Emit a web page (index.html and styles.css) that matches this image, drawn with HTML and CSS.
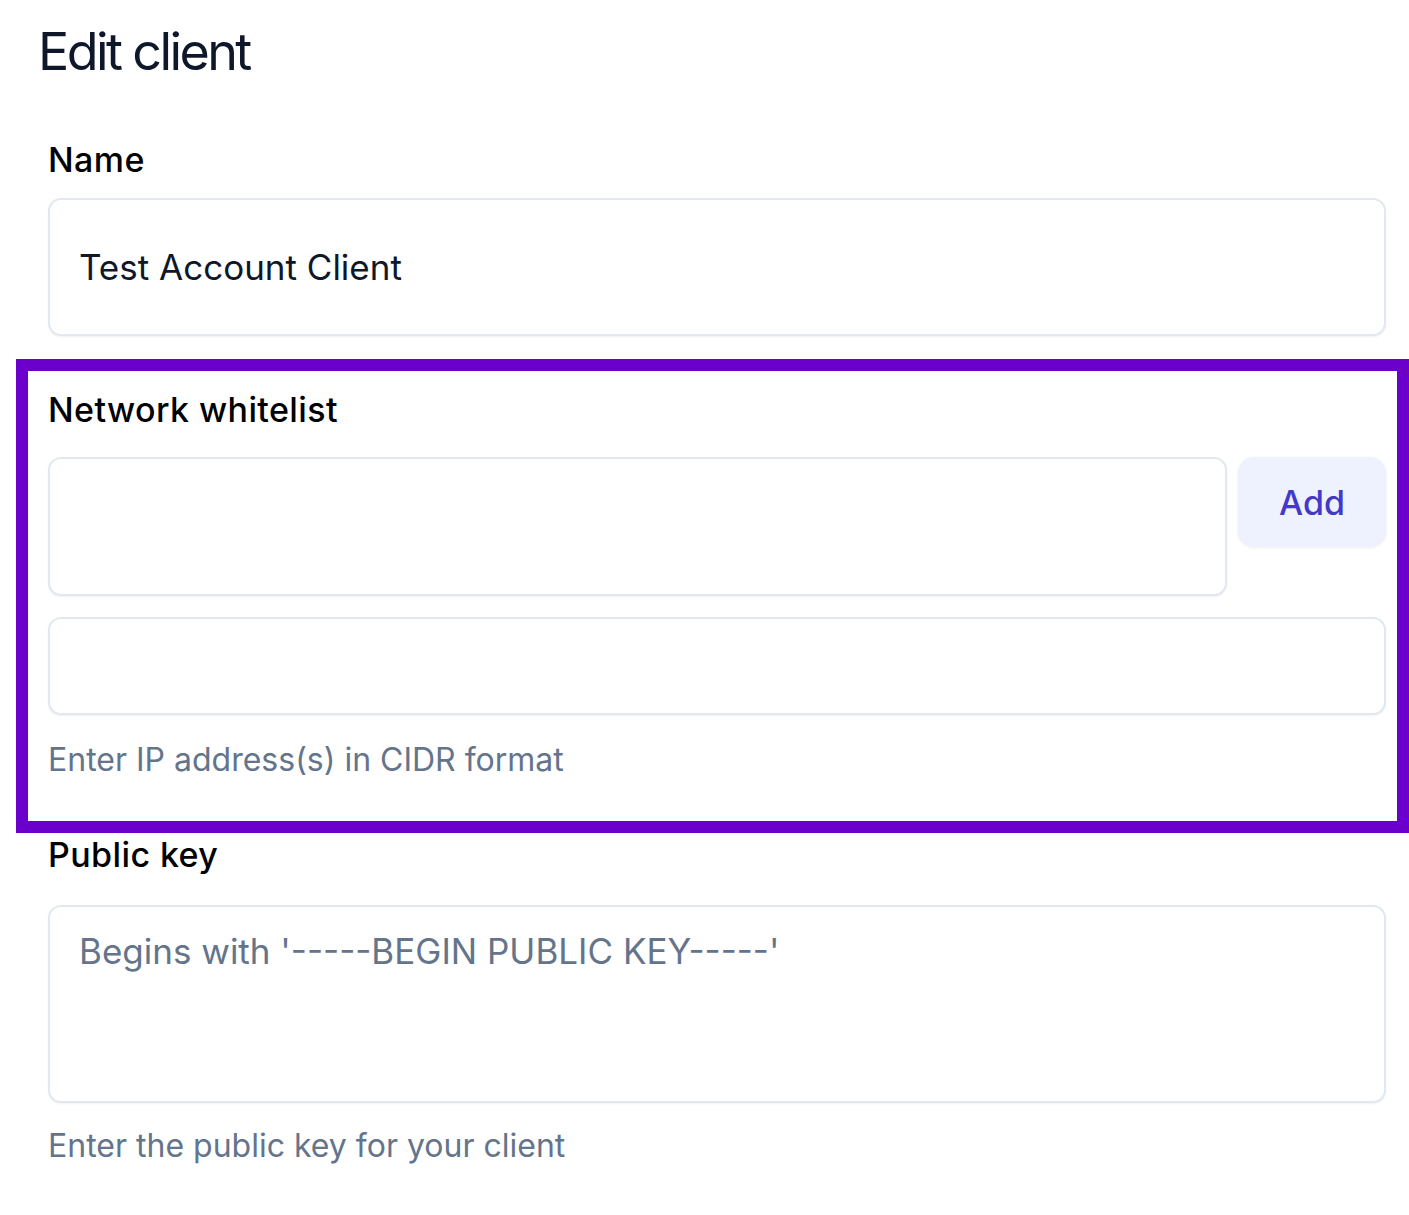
FILE: index.html
```html
<!DOCTYPE html>
<html lang="en">
<head>
<meta charset="utf-8">
<title>Edit client</title>
<link rel="stylesheet" href="styles.css">
</head>
<body>
<main class="page">
  <h1 class="title">Edit client</h1>

  <div class="field field-name">
    <label class="label" for="name">Name</label>
    <input class="input input-name" id="name" type="text" value="Test Account Client">
  </div>

  <div class="field field-network">
    <label class="label" for="cidr">Network whitelist</label>
    <div class="row">
      <input class="input input-cidr" id="cidr" type="text">
      <button class="btn-add" type="button">Add</button>
    </div>
    <div class="input list-box"></div>
    <p class="help help-network">Enter IP address(s) in CIDR format</p>
    <div class="highlight"></div>
  </div>

  <div class="field field-key">
    <label class="label" for="key">Public key</label>
    <textarea class="input textarea" id="key" placeholder="Begins with '-----BEGIN PUBLIC KEY-----'"></textarea>
    <p class="help help-key">Enter the public key for your client</p>
  </div>
</main>
</body>
</html>
```

FILE: styles.css
```css
* { box-sizing: border-box; }

html, body {
  margin: 0;
  padding: 0;
  background: #ffffff;
}

body {
  font-family: Inter, "Noto Sans", "Liberation Sans", sans-serif;
  color: #0f172a;
}

.page {
  padding: 20px 23px 0 48px;
  display: flex;
  flex-direction: column;
}

.title {
  margin: 0 0 0 -10px;
  font-size: 52px;
  line-height: 64px;
  font-weight: 400;
  letter-spacing: -2.6px;
  color: #0f172a;
}

.field {
  display: flex;
  flex-direction: column;
}

.field-name { margin-top: 56px; }
.field-network { margin-top: 54px; position: relative; }
.field-key { margin-top: 55px; }

.label {
  font-size: 34px;
  line-height: 40px;
  font-weight: 500;
  letter-spacing: 0.4px;
  color: #000000;
}

.input {
  display: block;
  width: 100%;
  border: 2px solid #e2e8f0;
  border-radius: 13px;
  background: #ffffff;
  box-shadow: 0 1px 2px rgba(15, 23, 42, 0.06);
  font-family: inherit;
  font-size: 35px;
  color: #0f172a;
  padding: 0 29px;
  outline: none;
}

.input-name {
  margin-top: 18px;
  height: 138px;
}

.row {
  margin-top: 27px;
  display: flex;
  align-items: flex-start;
  gap: 11px;
}

.input-cidr {
  flex: 1;
  height: 139px;
}

.btn-add {
  width: 148px;
  height: 90px;
  border: none;
  border-radius: 16px;
  background: #eef2ff;
  color: #4338ca;
  font-family: inherit;
  font-size: 34px;
  font-weight: 500;
  box-shadow: 0 1px 3px rgba(15, 23, 42, 0.08);
  padding: 0;
}

.list-box {
  margin-top: 21px;
  height: 98px;
}

.help {
  margin: 0;
  font-size: 32px;
  line-height: 40px;
  color: #64748b;
}

.help-network { margin-top: 25px; }

.highlight {
  position: absolute;
  left: -32px;
  top: -31px;
  right: -23px;
  bottom: -53px;
  border: 12px solid #6b00cc;
  pointer-events: none;
}

.textarea {
  margin-top: 30px;
  height: 198px;
  padding: 17px 29px;
  line-height: 54px;
  resize: none;
}

.textarea::placeholder {
  color: #64748b;
  opacity: 1;
}

.help-key { margin-top: 23px; }
```
